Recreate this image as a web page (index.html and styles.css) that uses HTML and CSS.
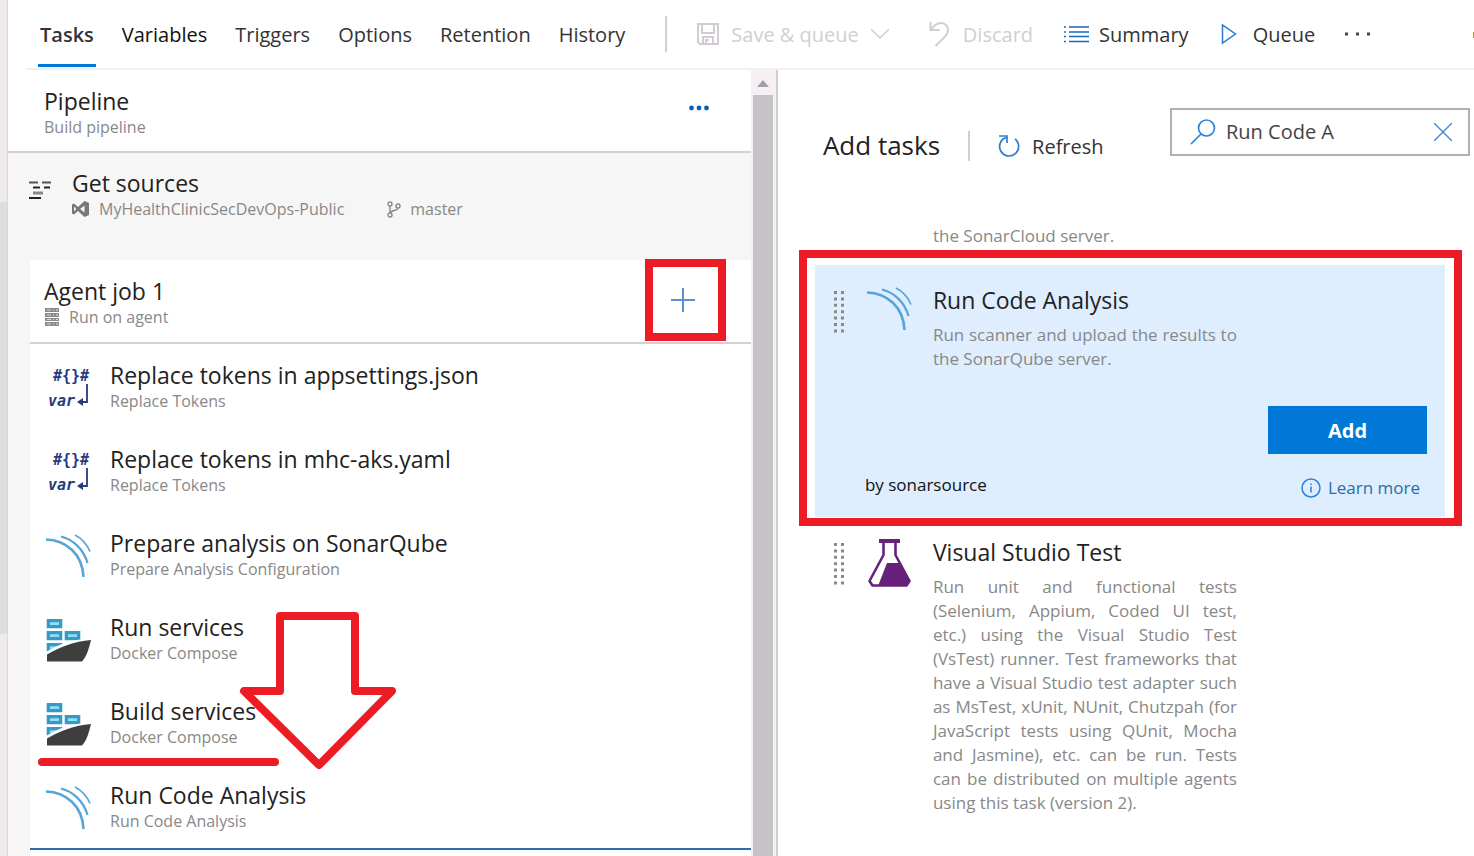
FILE: index.html
```html
<!DOCTYPE html>
<html lang="en">
<head>
<meta charset="utf-8">
<title>Build pipeline - Tasks</title>
<link rel="stylesheet" href="styles.css">
</head>
<body>
<svg class="defs" aria-hidden="true">
  <symbol id="sonar" viewBox="0 0 48 48">
    <g fill="none" stroke="#57a5d8">
      <path d="M2 5.500C22 6 38.500 20 39.500 43" stroke-width="2.600"/>
      <path d="M17 2.500C29 5.500 39.500 15 43.500 29" stroke-width="2.200"/>
      <path d="M31 1C38 4.500 43 10.500 46 17.500" stroke-width="1.700"/>
    </g>
  </symbol>
  <symbol id="docker" viewBox="0 0 48 48">
    <g fill="#8de0f5" stroke="#3999c6" stroke-width="3.200">
      <path d="M4.300 2.600h12.400v6H4.300zM4.300 14.600h12.400v6H4.300zM22.300 14.600h12.400v6H22.300zM4.300 26.600h12.400v6H4.300z"/>
    </g>
    <path d="M2 34C14 26 29 21.500 48 20L47 24 38 45H2z" fill="#fff"/>
    <path d="M3 36.500C16 29 30 23.500 47 22C45 30 43 38 38 43.500H3z" fill="#3e3e3e"/>
  </symbol>
  <symbol id="grip" viewBox="0 0 12 44">
    <path d="M2.500 1V44M9.500 1V44" stroke="#8a8a8a" stroke-width="3" stroke-dasharray="3 3.400"/>
  </symbol>
</svg>

<div class="app">
  <div class="rail"><div class="rail-thumb"></div></div>
  <main class="main">
    <header class="topbar">
      <nav class="tabs" aria-label="Pipeline sections">
        <a class="tab tab-active" href="#">Tasks</a>
        <a class="tab tab-hover" href="#">Variables</a>
        <a class="tab" href="#">Triggers</a>
        <a class="tab" href="#">Options</a>
        <a class="tab" href="#">Retention</a>
        <a class="tab" href="#">History</a>
      </nav>
      <div class="commands">
        <button class="command command-save" disabled>
          <svg width="22" height="22" viewBox="0 0 22 22" fill="none" stroke="#d0ccd1" stroke-width="2"><path d="M1 1h20v20H3l-2-2zM5 1v9h12V1M6 21v-7h10v7M9 21v-4h3"/></svg>
          <span>Save &amp; queue</span>
          <svg width="18" height="12" viewBox="0 0 18 12" fill="none" stroke="#cfcfcf" stroke-width="1.500"><path d="M0 1l9 9 9-9"/></svg>
        </button>
        <button class="command command-discard" disabled>
          <svg width="20" height="26" viewBox="0 0 20 26" fill="none" stroke="#cfcfcf" stroke-width="2"><path d="M1.500 1v8h9M2 8.500C6 3 9 2 12 2C17 2 19 6 19 9C19 12 17.500 14 15 16.500L6.500 25"/></svg>
          <span>Discard</span>
        </button>
        <button class="command command-summary">
          <svg width="26" height="18" viewBox="0 0 26 18" fill="none" stroke="#1569b8" stroke-width="1.600"><path d="M6 2h20M6 7h20M6 11.500h20M6 16.500h20"/><path d="M1 2h2M1 7h2M1 11.500h2M1 16.500h2"/></svg>
          <span>Summary</span>
        </button>
        <button class="command command-queue">
          <svg width="16" height="22" viewBox="0 0 16 22" fill="none" stroke="#2b78d0" stroke-width="1.500"><path d="M1.500 2v18L14.500 11z"/></svg>
          <span>Queue</span>
        </button>
        <button class="command" aria-label="More commands">
          <svg width="26" height="4" viewBox="0 0 26 4" fill="#444"><path d="M0 .500h3v3H0zM11 .500h3v3h-3zM22 .500h3v3h-3z"/></svg>
        </button>
      </div>
      <svg class="edge" width="2" height="8" viewBox="0 0 2 8"><path d="M1 2h1v6H1z" fill="#a59a48"/></svg>
    </header>

    <div class="columns">
      <section class="left">
        <div class="tree">
          <div class="pipeline">
            <div>
              <h2 class="title">Pipeline</h2>
              <p class="sub">Build pipeline</p>
            </div>
            <button class="plain" aria-label="Pipeline menu">
              <svg width="20" height="6" viewBox="0 0 20 6" fill="#0f5fae"><circle cx="2.500" cy="3" r="2.400"/><circle cx="10" cy="3" r="2.400"/><circle cx="17.500" cy="3" r="2.400"/></svg>
            </button>
          </div>
          <div class="sources">
            <svg class="sources-icon" width="22" height="20" viewBox="0 0 22 20" fill="none" stroke-width="2"><path d="M0 2.500h9M13 2.500h9" stroke="#555"/><path d="M4 7.500h7M15 7.500h6" stroke="#222"/><path d="M4 13h10" stroke="#888" stroke-width="3"/><path d="M0 18h12" stroke="#222"/></svg>
            <div>
              <h2 class="title">Get sources</h2>
              <p class="sub sub-icons">
                <svg width="18" height="16" viewBox="0 0 18 16" fill="#777"><path fill-rule="evenodd" d="M12.500 0L17 2v12l-4.500 2L6 10 2 13.500 0 12.500v-9L2 2.500 6 6zM12.500 4.500L8 8l4.500 3.500zM2 5.500v5L4.300 8z"/></svg>
                <span>MyHealthClinicSecDevOps-Public</span>
                <svg class="branch" width="14" height="17" viewBox="0 0 14 17" fill="none" stroke="#888" stroke-width="1.400"><circle cx="3" cy="3" r="2"/><circle cx="3" cy="14" r="2"/><circle cx="11" cy="5" r="2"/><path d="M3 5v7M11 7C11 10 4 9 3 12"/></svg>
                <span>master</span>
              </p>
            </div>
          </div>
          <div class="job">
            <div class="job-head">
              <div>
                <h2 class="title">Agent job 1</h2>
                <p class="sub sub-icons">
                  <svg width="16" height="18" viewBox="0 0 16 18"><path d="M1 0h14v4H1zM1 5h14v4H1zM1 10h14v3H1zM1 14h14v4H1z" fill="#8a8a8a"/><path d="M3 2h4M9 2h1M12 2h2M3 7h4M9 7h1M12 7h2M3 11.500h4M9 11.500h1M12 11.500h2M3 16h4M9 16h1M12 16h2" stroke="#ddd"/></svg>
                  <span>Run on agent</span>
                </p>
              </div>
              <button class="plain add-job" aria-label="Add a task to Agent job 1">
                <svg width="24" height="24" viewBox="0 0 24 24" stroke="#5b8fd0" stroke-width="2"><path d="M12 0v24M0 12h24"/></svg>
              </button>
            </div>
            <ul class="tasks">
              <li class="task">
                <svg class="task-icon" viewBox="0 0 48 48"><text class="glyph" x="9" y="15">#{}#</text><text class="glyph glyph-var" x="4" y="40">var</text><path d="M43 18V36H37" fill="none" stroke="#263a7c" stroke-width="1.800"/><path d="M33 36l6-4v8z" fill="#263a7c"/></svg>
                <div><h3 class="title">Replace tokens in appsettings.json</h3><p class="sub">Replace Tokens</p></div>
              </li>
              <li class="task">
                <svg class="task-icon" viewBox="0 0 48 48"><text class="glyph" x="9" y="15">#{}#</text><text class="glyph glyph-var" x="4" y="40">var</text><path d="M43 18V36H37" fill="none" stroke="#263a7c" stroke-width="1.800"/><path d="M33 36l6-4v8z" fill="#263a7c"/></svg>
                <div><h3 class="title">Replace tokens in mhc-aks.yaml</h3><p class="sub">Replace Tokens</p></div>
              </li>
              <li class="task"><svg class="task-icon"><use href="#sonar"/></svg><div><h3 class="title">Prepare analysis on SonarQube</h3><p class="sub">Prepare Analysis Configuration</p></div></li>
              <li class="task"><svg class="task-icon"><use href="#docker"/></svg><div><h3 class="title">Run services</h3><p class="sub">Docker Compose</p></div></li>
              <li class="task"><svg class="task-icon"><use href="#docker"/></svg><div><h3 class="title">Build services</h3><p class="sub">Docker Compose</p></div>
                <svg class="drop-marker" width="360" height="164" viewBox="0 0 360 164" fill="none" stroke="#ed1c24" stroke-width="8" stroke-linecap="round" stroke-linejoin="round"><path d="M4 154H237"/><path d="M242 8H317V83H354L281 157L206 83H242z"/></svg>
              </li>
              <li class="task"><svg class="task-icon"><use href="#sonar"/></svg><div><h3 class="title">Run Code Analysis</h3><p class="sub">Run Code Analysis</p></div></li>
            </ul>
          </div>
        </div>
        <div class="scroll">
          <svg width="12" height="7" viewBox="0 0 12 7" fill="#a3a1a4"><path d="M6 0l6 7H0z"/></svg>
          <div class="scroll-thumb"></div>
        </div>
      </section>

      <section class="right">
        <div class="catalog-head">
          <h1 class="catalog-title">Add tasks</h1>
          <button class="command refresh">
            <svg width="22" height="24" viewBox="0 0 22 24" fill="none" stroke="#2e7cd2" stroke-width="1.700"><path d="M8 3.500A9.500 9.500 0 1 0 17 5M1 2h8v7"/></svg>
            <span>Refresh</span>
          </button>
          <label class="search">
            <svg width="26" height="26" viewBox="0 0 26 26" fill="none" stroke="#2e83dc" stroke-width="1.700"><circle cx="16.500" cy="9" r="8"/><path d="M11 15L1 25"/></svg>
            <input class="search-input" type="text" value="Run Code A" aria-label="Search tasks">
            <button class="plain" aria-label="Clear search"><svg width="18" height="18" viewBox="0 0 18 18" stroke="#3f87dc" stroke-width="1.400"><path d="M0 0l18 18M18 0L0 18"/></svg></button>
          </label>
        </div>
        <div class="catalog">
          <p class="desc previous">the SonarCloud server.</p>
          <article class="card card-selected">
            <svg class="grip"><use href="#grip"/></svg>
            <svg class="card-icon"><use href="#sonar"/></svg>
            <div class="card-text">
              <h2 class="title">Run Code Analysis</h2>
              <p class="desc">Run scanner and upload the results to the SonarQube server.</p>
            </div>
            <div class="card-foot">
              <span class="author">by sonarsource</span>
              <div class="actions">
                <button class="add">Add</button>
                <a class="learn" href="#"><svg width="20" height="20" viewBox="0 0 20 20" fill="none" stroke="#2f80d8" stroke-width="1.500"><circle cx="10" cy="10" r="9"/><path d="M10 8.500v6M10 5.500v1.500"/></svg>Learn more</a>
              </div>
            </div>
          </article>
          <article class="card">
            <svg class="grip"><use href="#grip"/></svg>
            <svg class="card-icon" viewBox="0 0 48 48"><path fill="#68217a" d="M14 0h21v4H14z"/><path fill="none" stroke="#68217a" stroke-width="2.600" stroke-linejoin="round" d="M18.500 3v13L4.500 42l3 4.500h34l3-4.500L30.500 16V3"/><path fill="#68217a" d="M22 24h12l11 18-4 5H13z"/></svg>
            <div class="card-text">
              <h2 class="title">Visual Studio Test</h2>
              <p class="desc">Run unit and functional tests (Selenium, Appium, Coded UI test, etc.) using the Visual Studio Test (VsTest) runner. Test frameworks that have a Visual Studio test adapter such as MsTest, xUnit, NUnit, Chutzpah (for JavaScript tests using QUnit, Mocha and Jasmine), etc. can be run. Tests can be distributed on multiple agents using this task (version 2).</p>
            </div>
          </article>
        </div>
      </section>
    </div>
  </main>
</div>
</body>
</html>
```
FILE: styles.css
```css
* { box-sizing: border-box; }

body {
  margin: 0;
  background: #fff;
  color: #222;
  font-family: "Open Sans", "Noto Sans", sans-serif;
}

h1, h2, h3, p, ul { margin: 0; padding: 0; font-weight: 400; }
ul { list-style: none; }
svg { display: block; flex: none; }
a { text-decoration: none; }
button { font: inherit; }
.defs { position: absolute; width: 0; height: 0; }

.app { display: flex; min-height: 100vh; }

.rail {
  flex: 0 0 8px;
  padding-top: 202px;
  background: #eeeaee;
  border-right: 1px solid #d8d8d8;
}
.rail-thumb { height: 432px; background: #dedede; }

.main { flex: 1; min-width: 0; display: flex; flex-direction: column; }

/* Top bar */
.topbar {
  display: flex;
  align-items: center;
  height: 70px;
  margin-left: 18px;
  border-bottom: 2px solid #f1f0f2;
}
.tabs { display: flex; gap: 24px; height: 100%; margin-left: 12px; }
.tab {
  display: flex;
  align-items: center;
  padding: 4px 2px 0;
  color: #333;
  font-size: 20px;
  height: 67px;
  border-bottom: 3px solid transparent;
}
.tab-active { font-weight: 600; border-bottom-color: #0078d7; }
.tab-hover { color: #111; }
.commands {
  display: flex;
  align-items: center;
  height: 36px;
  margin-left: 38px;
  padding-left: 30px;
  border-left: 2px solid #d0d0d0;
}
.command {
  display: flex;
  align-items: center;
  gap: 12px;
  padding: 0;
  border: 0;
  background: none;
  color: #333;
  font-size: 20px;
  white-space: nowrap;
}
.command:disabled { color: #cfcfd1; }
.command-save { margin-right: 40px; }
.command-discard { margin-right: 30px; gap: 14px; }
.command-summary { margin-right: 32px; gap: 10px; }
.command-queue { margin-right: 30px; gap: 16px; }
.edge { margin-left: auto; }

.columns {
  flex: 1;
  display: grid;
  grid-template-columns: minmax(0, 11fr) minmax(0, 10fr);
}

/* Pipeline tree */
.left { display: flex; }
.tree { flex: 1; min-width: 0; display: flex; flex-direction: column; background: #f6f6f6; }
.title { font-size: 23px; line-height: 30px; color: #222; }
.sub { font-size: 16px; line-height: 22px; color: #888; }
.sub-icons { display: flex; align-items: center; gap: 9px; }
.plain { padding: 0; border: 0; background: none; }

.pipeline {
  display: flex;
  justify-content: space-between;
  align-items: flex-start;
  height: 83px;
  padding: 16px 42px 0 36px;
  background: #fff;
  border-bottom: 2px solid #d2d2d2;
}
.pipeline .plain { margin-top: 19px; }
.sources { display: flex; gap: 21px; height: 107px; padding: 15px 21px 0; }
.sources-icon { margin-top: 12px; }
.branch { margin-left: 34px; }

.job { flex: 1; margin-left: 22px; background: #fff; }
.job-head {
  display: flex;
  justify-content: space-between;
  height: 84px;
  padding: 16px 25px 0 14px;
  border-bottom: 2px solid #d2d2d2;
}
.add-job {
  display: grid;
  place-items: center;
  width: 81px;
  height: 82px;
  margin-top: -17px;
  padding-right: 4px;
  border: 8px solid #ed1c24;
}

.tasks { border-bottom: 2px solid #2a6da8; }
.task { position: relative; display: flex; gap: 18px; height: 84px; padding: 16px 14px 0; }
.task-icon { width: 48px; height: 48px; margin-top: 6px; overflow: visible; }
.glyph {
  fill: #263a7c;
  font-family: "DejaVu Sans Mono", monospace;
  font-size: 15px;
  font-weight: 700;
}
.glyph-var { font-style: italic; }
.drop-marker { position: absolute; left: 8px; top: -72px; pointer-events: none; }

.scroll {
  flex: 0 0 25px;
  display: flex;
  flex-direction: column;
  align-items: center;
  gap: 8px;
  padding-top: 10px;
  background: #f6f0f5;
}
.scroll-thumb { flex: 1; width: 20px; background: #c5c3c6; }

/* Task catalog */
.right { border-left: 2px solid #cfcdd0; }
.catalog-head { display: flex; align-items: center; height: 108px; padding: 0 4px 0 45px; margin-top: 22px; }
.catalog-title { font-size: 26px; line-height: 34px; padding-bottom: 2px; color: #222; white-space: nowrap; }
.refresh { margin-left: 28px; padding-left: 28px; border-left: 2px solid #d0d0d0; height: 30px; gap: 12px; }
.search {
  display: flex;
  align-items: center;
  width: 300px;
  height: 48px;
  margin: -29px 0 0 auto;
  padding: 0 16px 0 18px;
  border: 2px solid #b0b0b0;
}
.search-input {
  flex: 1;
  min-width: 0;
  padding: 0 10px;
  border: 0;
  outline: 0;
  background: none;
  color: #444;
  font: inherit;
  font-size: 20px;
}

.catalog { margin: 24px 29px 0 37px; }
.desc { max-width: 304px; font-size: 17px; line-height: 24px; color: #888; text-align: justify; }
.previous { margin: 0 0 17px 118px; }
.card {
  position: relative;
  display: grid;
  grid-template-columns: 12px 48px 1fr;
  grid-template-rows: 1fr auto;
  column-gap: 20px;
  padding: 20px 18px 17px;
}
.card-selected { min-height: 252px; background: #deeeff; }
.card-selected::after {
  content: "";
  position: absolute;
  inset: -15px -17px -9px -16px;
  border: 8px solid #ed1c24;
  pointer-events: none;
}
.grip { width: 12px; height: 44px; margin-top: 5px; }
.card-icon { width: 48px; height: 48px; margin-top: 2px; }
.card-text .title { margin-bottom: 8px; }
.card-foot {
  grid-column: 2 / -1;
  display: flex;
  justify-content: space-between;
  align-items: flex-end;
}
.author { font-size: 17px; line-height: 30px; color: #111; }
.actions { display: flex; flex-direction: column; align-items: flex-end; gap: 22px; }
.add {
  width: 159px;
  height: 48px;
  border: 0;
  background: #0078d7;
  color: #fff;
  font-size: 20px;
  font-weight: 700;
}
.learn { display: flex; align-items: center; gap: 7px; margin-right: 7px; color: #2a6da8; font-size: 17px; line-height: 24px; }
```
